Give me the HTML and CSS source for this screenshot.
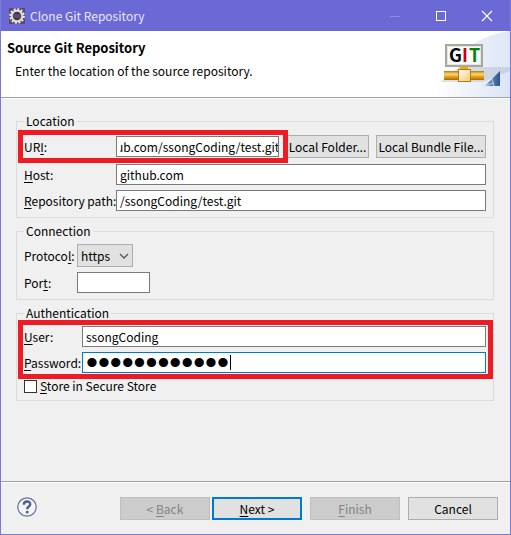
FILE: index.html
```html
<!DOCTYPE html>
<html lang="en">
<head>
<meta charset="utf-8">
<title>Clone Git Repository</title>
<link rel="stylesheet" href="styles.css">
</head>
<body>
<div class="dialog">
  <header class="titlebar">
    <svg class="app-icon" viewBox="0 0 16 16" aria-hidden="true">
      <rect width="16" height="16" fill="#5b4a78"/>
      <circle cx="8" cy="8" r="6.8" fill="none" stroke="#f1eee6" stroke-width="2" stroke-dasharray="2 1.56"/>
      <circle cx="8" cy="8" r="5.3" fill="#3c3555" stroke="#e4dfd6" stroke-width="2"/>
      <path d="M4 7h8M4 9h8" stroke="#6f6788" stroke-width="1"/>
    </svg>
    <h1 class="title">Clone Git Repository</h1>
    <div class="window-controls">
      <button class="window-button" type="button" aria-label="Minimize" disabled><svg viewBox="0 0 12 12"><path d="M1 6.500h10" stroke="#8f8ce0"/></svg></button>
      <button class="window-button" type="button" aria-label="Maximize"><svg viewBox="0 0 12 12"><rect x="1.500" y="1.500" width="9" height="9" fill="none" stroke="#fff"/></svg></button>
      <button class="window-button" type="button" aria-label="Close"><svg viewBox="0 0 12 12"><path d="M1 1l10 10M11 1L1 11" stroke="#fff" stroke-width="1.200"/></svg></button>
    </div>
  </header>

  <section class="banner">
    <div class="banner-text">
      <h2 class="banner-title">Source Git Repository</h2>
      <p class="banner-message">Enter the location of the source repository.</p>
    </div>
    <svg class="banner-image" viewBox="0 0 75 66" aria-hidden="true">
      <defs>
        <linearGradient id="sky" x1="0" x2="1"><stop offset="0" stop-color="#fff"/><stop offset="1" stop-color="#cfdcf3"/></linearGradient>
        <linearGradient id="gold" x1="0" x2="0" y1="0" y2="1"><stop offset="0" stop-color="#b87908"/><stop offset=".35" stop-color="#ffd97a"/><stop offset=".6" stop-color="#e9a820"/><stop offset="1" stop-color="#a96b00"/></linearGradient>
        <linearGradient id="hub" x1="0" x2="1" y1="0" y2="1"><stop offset="0" stop-color="#fff"/><stop offset="1" stop-color="#f3c766"/></linearGradient>
        <linearGradient id="corner" x1="0" x2="1"><stop offset="0" stop-color="#7e9fd0"/><stop offset="1" stop-color="#2e5590"/></linearGradient>
      </defs>
      <path d="M75 0C40 5 5 30 0 66h75z" fill="url(#sky)" opacity=".75"/>
      <path d="M75 0C55 3 36 12 25 25L75 40z" fill="#e3ebf8" opacity=".5"/>
      <path d="M5 51L24 36H75V40L48 51z" fill="#8a93a6" opacity=".25"/>
      <rect x="11" y="14" width="36" height="21" fill="#fff" stroke="#a8a898" stroke-width="2"/>
      <rect x="12.500" y="15.500" width="33" height="18" fill="#f8fbff" stroke="#dfe7ef"/>
      <g class="git-letters"><text x="14" y="31" fill="#000">G</text><text x="27" y="31" fill="#c8000a">I</text><text x="34" y="31" fill="#078007">T</text></g>
      <rect x="25" y="35" width="8" height="4" fill="#e3a52a"/>
      <rect x="9" y="40" width="40" height="9" fill="url(#gold)"/>
      <rect x="23.500" y="38.500" width="12" height="12" fill="url(#hub)" stroke="#b67a0c"/>
      <path d="M65 40v15H50z" fill="url(#corner)"/>
      <path d="M57 48l2 7M50 55l9-3" stroke="#b9cdea" fill="none"/>
    </svg>
  </section>

  <form class="content">
    <fieldset class="group location">
      <legend>Location</legend>
      <div class="marked uri-mark">
        <label for="uri">UR<u>I</u>:</label>
        <input class="field uri" id="uri" type="text" value="ub.com/ssongCoding/test.git">
      </div>
      <button class="button local" type="button">Local Folder...</button>
      <button class="button local" type="button">Local Bundle File...</button>
      <label for="host"><u>H</u>ost:</label>
      <input class="field wide" id="host" type="text" value="github.com">
      <label for="path"><u>R</u>epository path:</label>
      <input class="field wide" id="path" type="text" value="/ssongCoding/test.git">
    </fieldset>

    <fieldset class="group connection">
      <legend>Connection</legend>
      <label for="protocol">Protoco<u>l</u>:</label>
      <div class="select-wrap">
        <select class="select" id="protocol"><option>https</option></select>
        <svg class="chevron" viewBox="0 0 10 6" aria-hidden="true"><path d="M1 1l4 4 4-4" fill="none" stroke="#555" stroke-width="1.300"/></svg>
      </div>
      <label for="port">Por<u>t</u>:</label>
      <input class="field port" id="port" type="text">
    </fieldset>

    <fieldset class="group authentication">
      <legend>Authentication</legend>
      <div class="marked credentials">
        <label for="user"><u>U</u>ser:</label>
        <input class="field" id="user" type="text" value="ssongCoding">
        <label for="password"><u>P</u>assword:</label>
        <div class="password-wrap">
          <input class="field active" id="password" type="password" value="ssongcoding1">
          <span class="caret"></span>
        </div>
      </div>
      <label class="check"><input type="checkbox"><span><u>S</u>tore in Secure Store</span></label>
    </fieldset>
  </form>

  <footer class="footer">
    <button class="help" type="button" aria-label="Help">
      <svg viewBox="0 0 20 20"><circle cx="10" cy="10" r="9.200" fill="#f4f5f8" stroke="#66718f" stroke-width="1.200"/><path d="M6.800 7.800C6.800 3.300 13.400 3.500 13.200 7.300C13 9.600 10.200 9.500 10.200 12.200" fill="none" stroke="#4d5f87" stroke-width="2.400"/><rect x="8.900" y="14" width="2.600" height="2.400" fill="#4d5f87"/></svg>
    </button>
    <div class="actions">
      <button class="button" type="button" disabled>&lt; <u>B</u>ack</button>
      <button class="button primary" type="button"><u>N</u>ext &gt;</button>
      <button class="button finish" type="button" disabled><u>F</u>inish</button>
      <button class="button cancel" type="button">Cancel</button>
    </div>
  </footer>
</div>
</body>
</html>
```
FILE: styles.css
```css
* { box-sizing: border-box; }

body {
  margin: 0;
  font: 12px/20px "Noto Sans CJK KR", "Noto Sans", sans-serif;
  color: #000;
}

button, input, select { font: inherit; color: inherit; margin: 0; }

u { text-underline-offset: 2px; }

label { white-space: nowrap; }

.dialog {
  display: flex;
  flex-direction: column;
  min-height: 100vh;
  background: #f0f0f0;
  border: 1px solid #7b79da;
  border-top: 0;
}

.titlebar {
  display: flex;
  align-items: center;
  height: 31px;
  padding-left: 8px;
  background: #6b69d6;
}

.app-icon { width: 16px; height: 16px; }

.title {
  flex: 1;
  margin: 0 0 0 5px;
  font-size: 12px;
  font-weight: 400;
  color: #e8e8fa;
}

.window-controls { display: flex; }

.window-button {
  display: flex;
  align-items: center;
  justify-content: center;
  width: 46px;
  height: 30px;
  padding: 0;
  border: 0;
  background: none;
}

.window-button svg { width: 12px; height: 12px; }

.banner {
  display: flex;
  justify-content: space-between;
  height: 68px;
  background: #fff;
  border-bottom: 1px solid #fff;
  box-shadow: inset 0 -1px #a0a0a0;
}

.banner-text { padding: 7px 0 0 6px; }

.banner-title { margin: 0; font-size: 13px; font-weight: 700; }

.banner-message { margin: 3px 0 0 8px; }

.banner-image { width: 75px; height: 66px; }

.git-letters { font: 700 18px "Noto Sans CJK KR", sans-serif; }

.content {
  flex: 1;
  display: flex;
  flex-direction: column;
  gap: 4px;
  padding: 13px 16px 0 15px;
}

.group {
  min-width: 0;
  margin: 0;
  padding: 4px 7px 6px;
  border: 1px solid #dcdcdc;
}

.group legend { height: 18px; line-height: 18px; padding: 0 2px; }

.location {
  display: grid;
  grid-template-columns: 92px 163px 90px 1fr;
  grid-template-rows: 25px 21px 21px;
  row-gap: 5px;
  align-items: center;
}

.marked { position: relative; display: grid; align-items: center; }

.marked::after {
  content: "";
  position: absolute;
  border: 5px solid #ed1c24;
  pointer-events: none;
}

.uri-mark { grid-column: 1 / 3; grid-template-columns: 92px 1fr; }

.uri-mark::after { inset: -6px -9px -6px -6px; }

.field {
  width: 100%;
  height: 21px;
  padding: 0 3px;
  border: 1px solid #7a7a7a;
  border-radius: 0;
  background: #fff;
  outline: 0;
}

.uri { padding-right: 0; text-indent: -4px; }

.wide { grid-column: 2 / 5; }

.button {
  height: 23px;
  padding: 0;
  border: 1px solid #adadad;
  background: #e1e1e1;
  line-height: 20px;
  white-space: nowrap;
}

.button:disabled { border-color: #bfbfbf; background: #ccc; color: #838383; }

.local { margin-left: 7px; }

.connection {
  display: grid;
  grid-template-columns: 53px 1fr;
  row-gap: 5px;
  align-items: center;
}

.select-wrap { position: relative; width: 56px; height: 23px; }

.select {
  display: block;
  width: 100%;
  height: 100%;
  padding: 0 3px;
  border: 1px solid #adadad;
  border-radius: 0;
  background: #e1e1e1;
  appearance: none;
}

.chevron { position: absolute; right: 4px; top: 9px; width: 10px; height: 6px; pointer-events: none; }

.port { width: 73px; }

.authentication { padding-bottom: 4px; }

.credentials { grid-template-columns: 58px 1fr; row-gap: 5px; }

.credentials::after { inset: -6px -7px -6px -6px; }

.password-wrap { position: relative; }

.active { display: block; border-color: #0078d7; font: 34px/19px "Liberation Sans", sans-serif; }

.caret { position: absolute; left: 148px; top: 3px; width: 1px; height: 15px; background: #000; }

.check { display: flex; align-items: center; gap: 3px; margin-top: 3px; }

.check input {
  width: 13px;
  height: 13px;
  border: 1px solid #333;
  background: #fff;
  appearance: none;
}

.footer {
  display: flex;
  justify-content: space-between;
  align-items: flex-start;
  height: 53px;
  padding: 15px 12px 0 16px;
  border-top: 1px solid #a0a0a0;
  box-shadow: inset 0 1px #fff;
}

.help { width: 20px; height: 20px; padding: 0; border: 0; background: none; }

.help svg { display: block; width: 20px; height: 20px; }

.actions { display: flex; }

.actions .button { width: 90px; }

.actions .primary { margin-left: 2px; border: 2px solid #0078d7; line-height: 18px; }

.actions .finish, .actions .cancel { margin-left: 8px; }
```
